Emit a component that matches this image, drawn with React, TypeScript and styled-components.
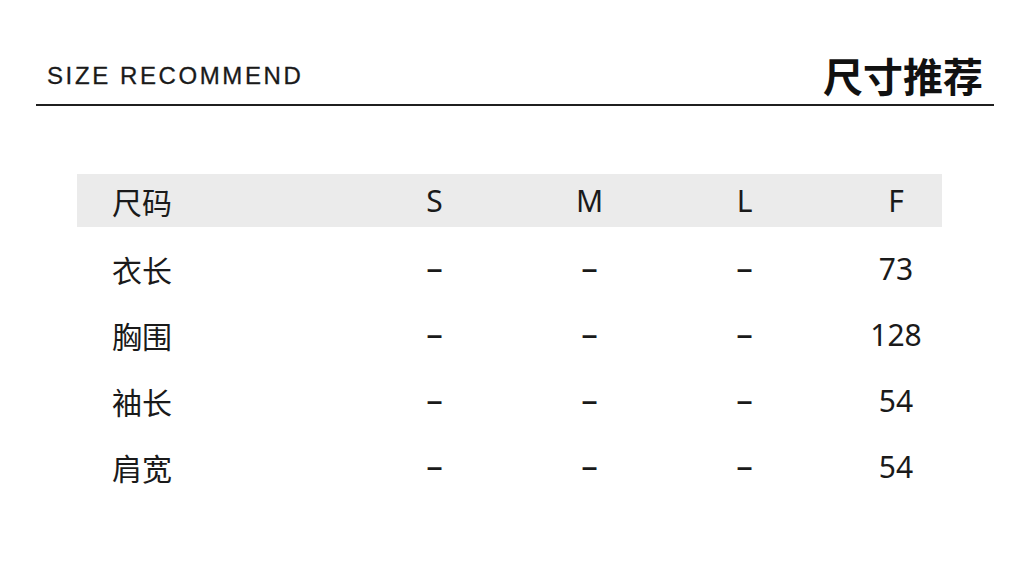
import React from "react";
import styled, { createGlobalStyle } from "styled-components";

const GlobalStyle = createGlobalStyle`
  html, body {
    margin: 0;
    padding: 0;
    background: #ffffff;
  }
  body {
    font-family: "Noto Sans", "Noto Sans CJK SC", sans-serif;
    color: #1a1a1a;
  }
`;

const Page = styled.div`
  width: 1024px;
  height: 575px;
  background: #ffffff;
  overflow: hidden;
`;

const Header = styled.header`
  margin: 45px 30px 0 36px;
  height: 59px;
  padding: 0 11px;
  border-bottom: 2px solid #1f1f1f;
  display: flex;
  align-items: center;
  justify-content: space-between;
`;

const EnTitle = styled.div`
  font-family: "Liberation Sans", Arial, sans-serif;
  font-size: 24px;
  letter-spacing: 2.6px;
  color: #1a1a1a;
  line-height: 1;
  padding-top: 2px;
  -webkit-text-stroke: 0.3px #1a1a1a;
`;

const CnTitle = styled.div`
  font-family: "Noto Sans CJK SC", sans-serif;
  font-weight: 700;
  font-size: 40px;
  line-height: 1;
  color: #111;
`;

const Table = styled.div`
  margin: 68px 0 0 77px;
  width: 865px;
`;

const Row = styled.div<{ $head?: boolean }>`
  display: grid;
  grid-template-columns: 280px 155px 155px 155px 1fr;
  align-items: center;
  height: ${(p) => (p.$head ? "53px" : "66px")};
  background: ${(p) => (p.$head ? "#ebebeb" : "transparent")};
`;

const Body = styled.div`
  margin-top: 9px;
`;

const Label = styled.div`
  padding-left: 35px;
  font-family: "Noto Sans CJK SC", sans-serif;
  font-size: 30px;
  line-height: 1;
`;

const Cell = styled.div<{ $last?: boolean; $dash?: boolean }>`
  text-align: center;
  padding-left: ${(p) => (p.$last ? "28px" : "0")};
  font-family: ${(p) =>
    p.$dash ? `"Liberation Sans", Arial, sans-serif` : `"Noto Sans", "Noto Sans CJK SC", sans-serif`};
  font-weight: ${(p) => (p.$dash ? 700 : 400)};
  font-size: ${(p) => (p.$dash ? "28px" : "30px")};
  line-height: 1;
`;

const sizes = ["S", "M", "L", "F"];
const rows: [string, string[]][] = [
  ["衣长", ["–", "–", "–", "73"]],
  ["胸围", ["–", "–", "–", "128"]],
  ["袖长", ["–", "–", "–", "54"]],
  ["肩宽", ["–", "–", "–", "54"]],
];

export default function App() {
  return (
    <Page>
      <GlobalStyle />
      <Header>
        <EnTitle>SIZE RECOMMEND</EnTitle>
        <CnTitle>尺寸推荐</CnTitle>
      </Header>
      <Table>
        <Row $head>
          <Label>尺码</Label>
          {sizes.map((s, i) => (
            <Cell key={s} $last={i === 3}>
              {s}
            </Cell>
          ))}
        </Row>
        <Body>
          {rows.map(([name, vals]) => (
            <Row key={name}>
              <Label>{name}</Label>
              {vals.map((v, i) => (
                <Cell key={i} $last={i === 3} $dash={v === "–"}>
                  {v}
                </Cell>
              ))}
            </Row>
          ))}
        </Body>
      </Table>
    </Page>
  );
}
